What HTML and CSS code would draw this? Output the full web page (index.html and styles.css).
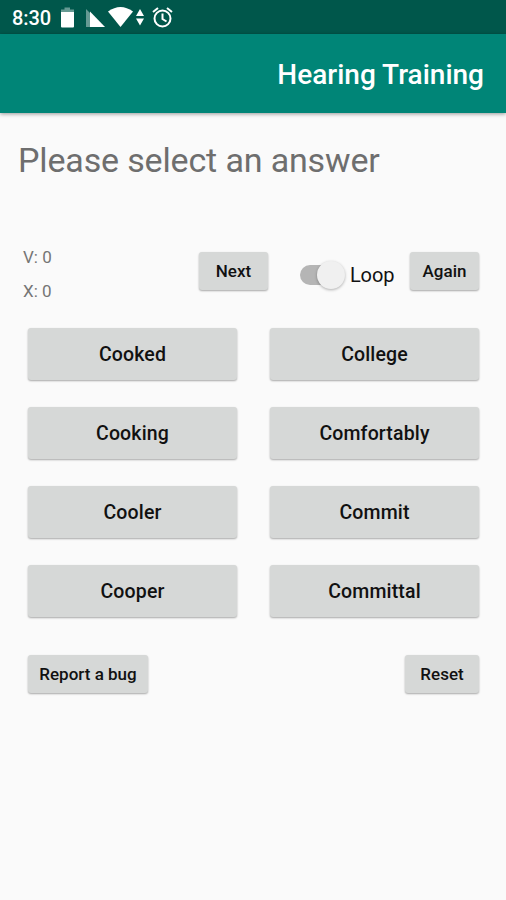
FILE: index.html
```html
<!DOCTYPE html>
<html lang="en">
<head>
<meta charset="utf-8">
<title>Hearing Training</title>
<link rel="stylesheet" href="styles.css">
</head>
<body>
<div class="status">
  <span class="clock">8:30</span>
  <svg class="icons" width="120" height="34" viewBox="56 0 120 34" fill="#fff">
    <path d="M64.500 7.500h5.500v2h4v3H61v-3h3.500z" opacity=".4"/>
    <path d="M61 12h13v14.500q0 1-1 1H62q-1 0-1-1z"/>
    <path d="M86 9l5 5v13h-5z" opacity=".4"/>
    <path d="M90 11.500v15.500h15z"/>
    <path d="M108 11.500Q120.500 2.500 133 11.500L120.500 27z"/>
    <path d="M140 9l4 7h-8zM140 25.500l4-7h-8z"/>
    <g fill="none" stroke="#fff" stroke-width="2"><circle cx="162.500" cy="18.500" r="8"/><path d="M162.500 13.500v5.500l4 2.500M153 12l5-4M172 12l-5-4"/></g>
  </svg>
</div>
<header class="appbar"><h1>Hearing Training</h1></header>
<main>
  <h2 class="prompt">Please select an answer</h2>
  <section class="controls">
    <div class="scores"><span>V: 0</span><span>X: 0</span></div>
    <button class="small next">Next</button>
    <label class="loop"><span class="track"><span class="thumb"></span></span>Loop</label>
    <button class="small again">Again</button>
  </section>
  <section class="answers">
    <button>Cooked</button><button>College</button>
    <button>Cooking</button><button>Comfortably</button>
    <button>Cooler</button><button>Commit</button>
    <button>Cooper</button><button>Committal</button>
  </section>
  <footer class="actions"><button class="small report">Report a bug</button><button class="small reset">Reset</button></footer>
</main>
</body>
</html>
```
FILE: styles.css
```css
* { box-sizing: border-box; }
body { margin: 0; height: 900px; background: #fafafa; font-family: Roboto, sans-serif; color: #111; overflow: hidden; }
.status { height: 34px; background: #00574b; display: flex; align-items: center; color: #fff; }
.clock { width: 56px; padding: 2px 0 0 12px; font-size: 20px; font-weight: 500; line-height: 30px; letter-spacing: -.1px; }
.icons { display: block; }
.appbar { height: 79px; background: #008577; box-shadow: 0 1px 4px rgba(0,0,0,.4); display: flex; align-items: center; justify-content: flex-end; padding: 3px 22px 0; }
h1 { margin: 0; color: #fff; font-size: 28px; font-weight: 500; line-height: 32px; }
.prompt { margin: 0; padding: 27px 18px 0; height: 133px; font-size: 34px; letter-spacing: -.15px; font-weight: 400; line-height: 40px; color: #6e6e6e; white-space: nowrap; }
.controls { display: flex; align-items: flex-start; height: 82px; padding: 0 27px 0 23px; }
.scores { width: 176px; display: flex; flex-direction: column; font-size: 17px; line-height: 34px; color: #757575; margin-top: -6px; }
button { border: 0; padding: 0; border-radius: 3px; background: #d6d8d7; color: #111; font-family: inherit; font-size: 19.500px; font-weight: 500; letter-spacing: .15px; box-shadow: 0 1px 2px rgba(0,0,0,.33); }
.small { height: 38px; font-size: 17px; letter-spacing: 0; }
.next { width: 69px; margin-top: 6px; }
.loop { display: flex; align-items: center; height: 30px; margin: 14px auto 0 32px; gap: 5px; font-size: 20px; letter-spacing: -.15px; }
.track { width: 45px; height: 20px; border-radius: 10px; background: linear-gradient(to right, #b5b5b5 36px, transparent 36px); display: flex; align-items: center; justify-content: flex-end; }
.thumb { width: 28px; height: 28px; flex: none; border-radius: 50%; background: #f0f0f0; box-shadow: 0 1px 3px rgba(0,0,0,.3); }
.again { width: 69px; margin-top: 6px; }
.answers { display: grid; grid-template-columns: 209px 209px; grid-auto-rows: 52px; gap: 27px 33px; padding: 0 28px; }
.actions { display: flex; justify-content: space-between; padding: 38px 27px 0 28px; }
.report { width: 120px; }
.reset { width: 74px; }
```
